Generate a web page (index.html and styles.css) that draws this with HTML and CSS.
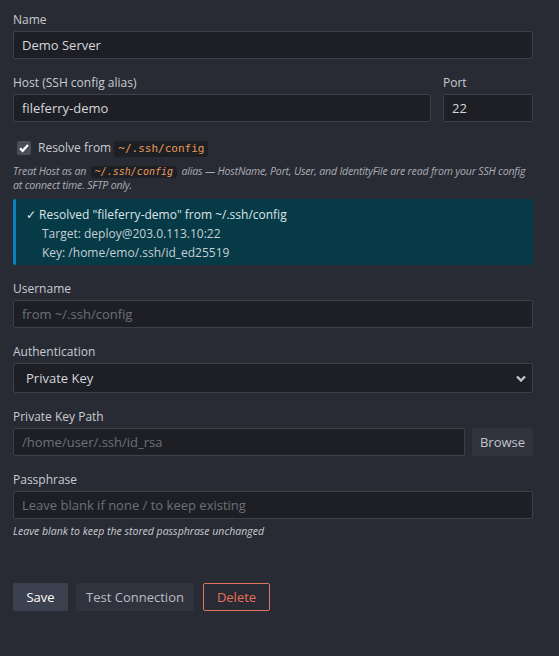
FILE: index.html
```html
<!DOCTYPE html>
<html>
<head>
    <title>Edit Server</title>
    <link rel="stylesheet" href="styles.css">
</head>
<body>
    <!-- Server connection form -->
    <form class="server-form">
        <div class="field">
            <label class="field-label">Name</label>
            <input type="text" class="text-input" value="Demo Server">
        </div>

        <div class="field-row">
            <div class="field grow">
                <label class="field-label">Host (SSH config alias)</label>
                <input type="text" class="text-input" value="fileferry-demo">
            </div>
            <div class="field port">
                <label class="field-label">Port</label>
                <input type="text" class="text-input" value="22">
            </div>
        </div>

        <!-- SSH config toggle -->
        <label class="check-row">
            <input type="checkbox" class="check" checked>
            <span>Resolve from <code class="chip">~/.ssh/config</code></span>
        </label>
        <p class="hint">Treat Host as an <code class="chip">~/.ssh/config</code> alias — HostName, Port, User, and IdentityFile are read from your SSH config<br>at connect time. SFTP only.</p>

        <div class="resolved">
            <div class="resolved-title">✓ Resolved "fileferry-demo" from ~/.ssh/config</div>
            <div class="resolved-line">Target: deploy@203.0.113.10:22</div>
            <div class="resolved-line">Key: /home/emo/.ssh/id_ed25519</div>
        </div>

        <div class="field">
            <label class="field-label">Username</label>
            <input type="text" class="text-input" placeholder="from ~/.ssh/config">
        </div>

        <div class="field">
            <label class="field-label">Authentication</label>
            <select class="select-input">
                <option>Private Key</option>
                <option>Password</option>
            </select>
        </div>

        <div class="field">
            <label class="field-label">Private Key Path</label>
            <div class="browse-row">
                <input type="text" class="text-input" placeholder="/home/user/.ssh/id_rsa">
                <button type="button" class="btn btn-browse">Browse</button>
            </div>
        </div>

        <div class="field">
            <label class="field-label">Passphrase</label>
            <input type="password" class="text-input" placeholder="Leave blank if none / to keep existing">
            <p class="hint small">Leave blank to keep the stored passphrase unchanged</p>
        </div>

        <!-- Actions -->
        <div class="actions">
            <button type="button" class="btn btn-save">Save</button>
            <button type="button" class="btn btn-test">Test Connection</button>
            <button type="button" class="btn btn-delete">Delete</button>
        </div>
    </form>
</body>
</html>
```

FILE: styles.css
```css
* {
  box-sizing: border-box;
  margin: 0;
  padding: 0;
}

body {
  font-family: "Open Sans", "Noto Sans", sans-serif;
  font-size: 13px;
  background: #282b33;
  color: #d4d7dd;
}

/* Form wrapper */
.server-form {
  max-width: 546px;
  padding: 12px 13px 0 13px;
}

.field {
  display: flex;
  flex-direction: column;
  margin-bottom: 16px;
}

.field-row {
  display: flex;
  gap: 12px;
}

.field-row .grow {
  flex: 1;
}

.field-row .port {
  width: 90px;
}

.field-label {
  font-size: 12px;
  line-height: 16px;
  color: #c9ccd2;
  margin-bottom: 3px;
}

/* Inputs */
.text-input,
.select-input {
  height: 28px;
  width: 100%;
  background: #1e1f24;
  border: 1px solid #3c4049;
  border-radius: 2px;
  color: #d4d7dd;
  font-family: inherit;
  font-size: 13px;
  padding: 0 8px;
  outline: none;
}

.text-input::placeholder {
  color: #6c7079;
}

.select-input {
  height: 30px;
  padding: 0 12px;
  appearance: none;
  background-image: url("data:image/svg+xml,%3Csvg xmlns='http://www.w3.org/2000/svg' width='10' height='7' viewBox='0 0 10 7'%3E%3Cpath d='M1 1.5l4 4 4-4' fill='none' stroke='%23c0c4cc' stroke-width='2.4'/%3E%3C/svg%3E");
  background-repeat: no-repeat;
  background-position: right 6px center;
}

/* Checkbox row */
.check-row {
  display: flex;
  align-items: center;
  gap: 7px;
  height: 20px;
  margin: 0 0 6px 4px;
  font-size: 12px;
  color: #c9ccd2;
}

.check {
  appearance: none;
  width: 14px;
  height: 14px;
  border-radius: 2px;
  background-color: #4a4e58;
  background-image: url("data:image/svg+xml,%3Csvg xmlns='http://www.w3.org/2000/svg' width='14' height='14' viewBox='0 0 14 14'%3E%3Cpath d='M3 7.2l2.6 2.6L11 4' fill='none' stroke='%23ffffff' stroke-width='2.2'/%3E%3C/svg%3E");
}

.chip {
  display: inline-block;
  font-family: "DejaVu Sans Mono", "Liberation Mono", monospace;
  font-size: 11px;
  line-height: 14px;
  background: #1e1f24;
  color: #e59a5c;
  padding: 1px 4px;
  border-radius: 3px;
}

.hint {
  font-size: 10.6px;
  font-style: italic;
  line-height: 14px;
  letter-spacing: -0.2px;
  color: #a9adb5;
}

.hint .chip {
  font-size: 10px;
  line-height: 12px;
  letter-spacing: 0;
  padding: 0 4px;
  margin: 0 2px;
}

.hint.small {
  margin-top: 5px;
  color: #c9ccd2;
  font-size: 10.5px;
  letter-spacing: 0;
}

/* Resolved info box */
.resolved {
  margin: 7px 0 16px;
  background: #053a46;
  border-left: 3px solid #0a7fc4;
  border-radius: 3px;
  padding: 6px 10px 3px 10px;
  font-size: 12px;
  line-height: 19px;
  color: #dfe5e8;
}

.resolved-line {
  padding-left: 16px;
  color: #c7d0d5;
}

/* Key path + browse */
.browse-row {
  display: flex;
  gap: 7px;
}

.browse-row .text-input {
  flex: 1;
}

/* Buttons */
.btn {
  height: 28px;
  border: none;
  border-radius: 2px;
  font-family: inherit;
  font-size: 13px;
  padding: 0 13px;
  cursor: pointer;
}

.btn-browse {
  width: 61px;
  padding: 0;
  background: #30333d;
  color: #c0c4cc;
}

.actions {
  display: flex;
  gap: 8px;
  margin-top: 45px;
}

.btn-save {
  width: 55px;
  padding: 0;
  background: #3b414e;
  color: #ffffff;
}

.btn-test {
  width: 118px;
  padding: 0;
  background: #30333d;
  color: #b9bdc5;
}

.btn-delete {
  width: 67px;
  padding: 0;
  margin-left: 1px;
  background: transparent;
  border: 1px solid #e2725d;
  color: #e8705a;
}
```
